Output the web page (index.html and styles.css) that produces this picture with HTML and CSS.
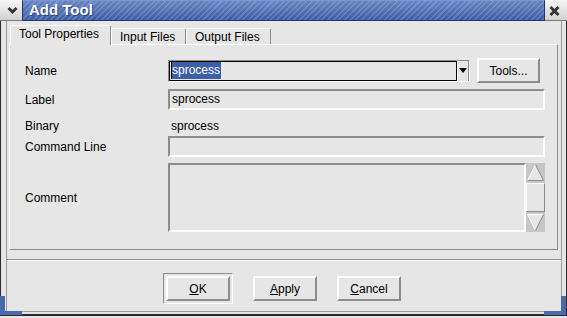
FILE: index.html
```html
<!DOCTYPE html>
<html lang="en">
<head>
  <meta charset="UTF-8" />
  <title>Add Tool</title>
  <link rel="stylesheet" href="styles.css">
</head>
<body>
  <div class="window">
    <div class="titlebar">
      <div class="tb-btn">
        <svg width="22" height="20" viewBox="0 0 22 20"><polyline points="8.5,8 12.5,12 16.5,8" fill="none" stroke="#333" stroke-width="2.8"/></svg>
      </div>
      <div class="tb-title">Add Tool</div>
      <div class="tb-btn">
        <svg width="22" height="20" viewBox="0 0 22 20"><path d="M5.5 7 L13.5 15 M13.5 7 L5.5 15" stroke="#333" stroke-width="2.8"/></svg>
      </div>
    </div>

    <div class="frame">
      <div class="client">
        <div class="tabs">
          <div class="tab active" style="width: 101px">Tool Properties</div>
          <div class="tab" style="width: 75px">Input Files</div>
          <div class="tab" style="width: 85px">Output Files</div>
        </div>

        <div class="panel">
          <div class="row row-name">
            <div class="lbl">Name</div>
            <div class="field-line">
              <div class="combo">
                <div class="combo-field"><span class="sel">sprocess</span></div>
                <div class="combo-arrow">
                  <svg width="8" height="5" viewBox="0 0 8 5"><polygon points="0,0 8,0 4,5" fill="#000"/></svg>
                </div>
              </div>
              <button class="btn btn-tools">Tools...</button>
            </div>
          </div>

          <div class="row row-input">
            <div class="lbl">Label</div>
            <div class="input">sprocess</div>
          </div>

          <div class="row row-binary">
            <div class="lbl">Binary</div>
            <div class="value">sprocess</div>
          </div>

          <div class="row row-cmd">
            <div class="lbl">Command Line</div>
            <div class="input"></div>
          </div>

          <div class="row row-comment">
            <div class="lbl">Comment</div>
            <div class="comment">
              <div class="textarea"></div>
              <div class="scrollbar">
                <div class="sb-arrow">
                  <svg width="19" height="19" viewBox="0 0 19 19">
                    <polygon points="1.5,17.5 9.5,1.5 17.5,17.5" fill="#e6e6e6"/>
                    <line x1="1.5" y1="17.5" x2="9.5" y2="1.5" stroke="#fff"/>
                    <line x1="9.5" y1="1.5" x2="17.5" y2="17.5" stroke="#8c8c8c"/>
                    <line x1="1.5" y1="17.5" x2="17.5" y2="17.5" stroke="#8c8c8c"/>
                  </svg>
                </div>
                <div class="sb-thumb"></div>
                <div class="sb-arrow">
                  <svg width="19" height="19" viewBox="0 0 19 19">
                    <polygon points="1.5,1.5 17.5,1.5 9.5,17.5" fill="#e6e6e6"/>
                    <line x1="1.5" y1="1.5" x2="17.5" y2="1.5" stroke="#fff"/>
                    <line x1="1.5" y1="1.5" x2="9.5" y2="17.5" stroke="#fff"/>
                    <line x1="17.5" y1="1.5" x2="9.5" y2="17.5" stroke="#8c8c8c"/>
                  </svg>
                </div>
              </div>
            </div>
          </div>
        </div>

        <div class="separator"></div>

        <div class="button-row">
          <div class="default-frame">
            <button class="btn"><u>O</u>K</button>
          </div>
          <button class="btn"><u>A</u>pply</button>
          <button class="btn"><u>C</u>ancel</button>
        </div>
      </div>
    </div>

    <div class="corner corner-left"></div>
    <div class="corner corner-right"></div>
  </div>
</body>
</html>
```

FILE: styles.css
```css
body {
  margin: 0;
  background: #e6e6e6;
  font-family: "Liberation Sans", Arial, sans-serif;
  font-size: 12px;
  color: #000;
}

.window {
  position: relative;
  width: 567px;
  height: 318px;
  display: flex;
  flex-direction: column;
  background: #e6e6e6;
  overflow: hidden;
}

/* title bar */
.titlebar {
  display: flex;
  height: 21px;
  flex-shrink: 0;
}

.tb-btn {
  width: 22px;
  height: 21px;
  box-sizing: border-box;
  background: linear-gradient(#f6f6f6, #d2d2d2);
  border-bottom: 1px solid #7a7a7a;
}

.tb-btn svg {
  display: block;
}

.tb-title {
  flex: 1;
  box-sizing: border-box;
  height: 21px;
  border: 1px solid #1f3469;
  border-top-color: #7d95cc;
  padding-left: 6px;
  color: #fff;
  font-size: 15px;
  font-weight: bold;
  line-height: 18px;
  text-shadow: 1px 1px 0 #2a437e;
  background:
    repeating-linear-gradient(135deg, rgba(255, 255, 255, 0.16) 0 1.5px, transparent 1.5px 4px),
    linear-gradient(#6584c4, #3e5ea4);
}

/* window frame */
.frame {
  flex: 1;
  display: flex;
  border-left: 1px solid #2b2b2b;
  border-right: 1px solid #2b2b2b;
  border-bottom: 2px solid #2b2b2b;
  padding: 0 4px 2px 5px;
  margin-bottom: 2px;
}

.client {
  flex: 1;
  border-left: 1px solid #9a9a9a;
  border-right: 1px solid #9a9a9a;
  border-bottom: 1px solid #9a9a9a;
  display: flex;
  flex-direction: column;
}

/* tabs */
.tabs {
  display: flex;
  align-items: flex-end;
  height: 19px;
  margin: 4px 0 0 3px;
}

.tab {
  height: 16px;
  box-sizing: border-box;
  border-top: 1px solid #fff;
  border-left: 1px solid #fff;
  border-right: 1px solid #8c8c8c;
  border-radius: 2px 2px 0 0;
  padding: 1px 0 0 8px;
  line-height: 14px;
  white-space: nowrap;
}

.tab.active {
  height: 20px;
  margin-bottom: -1px;
  position: relative;
  z-index: 1;
  background: #e6e6e6;
}

.panel {
  margin: 0 3px 0 2px;
  height: 206px;
  box-sizing: border-box;
  border-top: 1px solid #fff;
  border-left: 1px solid #fff;
  border-right: 1px solid #8c8c8c;
  border-bottom: 1px solid #8c8c8c;
  padding: 13px 11px 0 15px;
}

.row {
  display: grid;
  grid-template-columns: 143px 377px;
  align-items: center;
}

.row-name { height: 24px; }
.row-input { height: 21px; margin-top: 7px; }
.row-binary { height: 18px; margin-top: 7px; }
.row-cmd { height: 21px; margin-top: 1px; }
.row-comment { height: 69px; margin-top: 6px; }

.row-cmd .input {
  height: 21px;
}

.field-line {
  display: flex;
  align-items: center;
}

.input {
  height: 21px;
  box-sizing: border-box;
  border: 2px solid;
  border-color: #8c8c8c #fff #fff #8c8c8c;
  padding-left: 2px;
  line-height: 17px;
}

.value {
  padding-left: 3px;
}

/* combo box */
.combo {
  width: 302px;
  height: 22px;
  box-sizing: border-box;
  border: 1px solid;
  border-color: #8c8c8c #fff #fff #8c8c8c;
  display: flex;
}

.combo-field {
  flex: 1;
  border: 1px solid #000;
  padding-left: 1px;
  display: flex;
  align-items: center;
}

.sel {
  background: #3d5ea8;
  color: #fff;
  line-height: 17px;
  padding-right: 1px;
  border-left: 1px solid #000;
}

.combo-arrow {
  width: 10px;
  border-left: 1px solid #fff;
  border-right: 1px solid #8c8c8c;
  display: flex;
  align-items: center;
  justify-content: center;
}

.combo-arrow svg {
  display: block;
}

/* buttons */
.btn {
  width: 64px;
  height: 25px;
  box-sizing: border-box;
  border: 2px solid;
  border-color: #fff #8c8c8c #8c8c8c #fff;
  background: #e6e6e6;
  font-family: "Liberation Sans", Arial, sans-serif;
  font-size: 12px;
  color: #000;
  padding: 0;
}

.btn-tools {
  width: 63px;
  margin-left: 7px;
}

.comment {
  display: flex;
  height: 69px;
}

.textarea {
  width: 358px;
  box-sizing: border-box;
  border: 2px solid;
  border-color: #8c8c8c #fff #fff #8c8c8c;
}

.scrollbar {
  width: 19px;
  display: flex;
  flex-direction: column;
  background: #c6c6c6;
}

.sb-arrow {
  height: 19px;
}

.sb-arrow svg {
  display: block;
}

.sb-thumb {
  flex: 1;
  margin: 1px 0;
  border: 1px solid;
  border-color: #fff #8c8c8c #8c8c8c #fff;
  background: #e6e6e6;
}

.separator {
  margin-top: 9px;
  border-top: 1px solid #8c8c8c;
  border-bottom: 1px solid #fff;
}

.button-row {
  display: flex;
  justify-content: center;
  align-items: center;
  gap: 20px;
  margin-top: 12px;
  padding-right: 4px;
}

.default-frame {
  border: 1px solid;
  border-color: #8c8c8c #fff #fff #8c8c8c;
  padding: 2px;
}

.default-frame .btn {
  display: block;
}

/* resize corners */
.corner {
  position: absolute;
  bottom: 3px;
  width: 22px;
  height: 19px;
  box-sizing: border-box;
  border-bottom: 4px solid #4a6aae;
}

.corner-left {
  left: 0;
  border-left: 5px solid #4a6aae;
}

.corner-right {
  right: 1px;
  border-right: 5px solid #4a6aae;
}
```
